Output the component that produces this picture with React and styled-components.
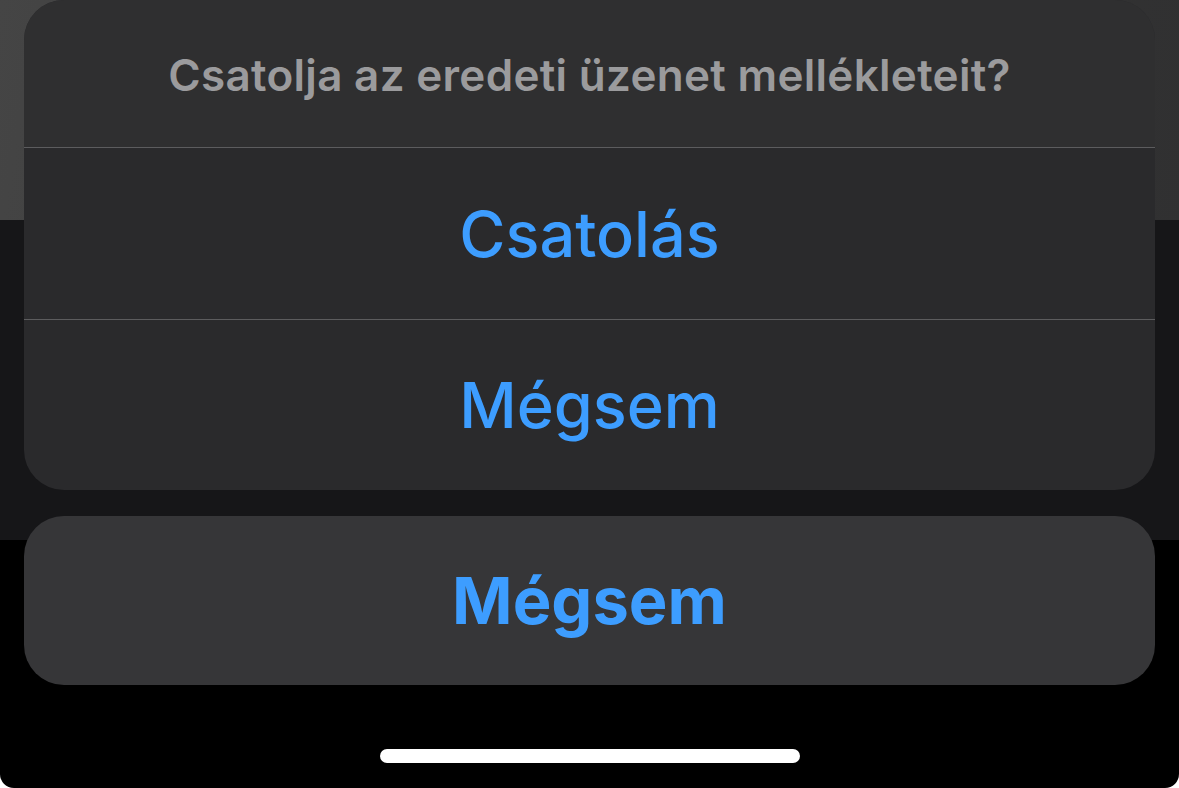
import React from 'react'
import styled, { createGlobalStyle } from 'styled-components'

const Global = createGlobalStyle`
  html, body {
    margin: 0;
    padding: 0;
    background: #fff;
  }
  * { box-sizing: border-box; }
`

const Screen = styled.div`
  width: 1179px;
  height: 788px;
  overflow: hidden;
  border-radius: 0 0 14px 14px;
  display: flex;
  flex-direction: column;
  font-family: Inter, "Noto Sans", "Liberation Sans", sans-serif;
  background:
    linear-gradient(to bottom,
      transparent 0 220px,
      #161618 220px 540px,
      #000 540px),
    linear-gradient(100deg, #454545 0%, #383838 40%, #2f2f30 100%);
`

const Sheet = styled.div`
  display: flex;
  flex-direction: column;
  gap: 26px;
  padding: 0 24px;
`

const Group = styled.div`
  display: flex;
  flex-direction: column;
  border-radius: 40px;
  overflow: hidden;
  background: #2a2a2c;
`

const Title = styled.div`
  height: 147px;
  display: flex;
  align-items: center;
  justify-content: center;
  padding-top: 2px;
  background: #2f2f30;
  color: #9b9b9d;
  font-size: 44px;
  font-weight: 600;
  letter-spacing: 0.3px;
`

const Divider = styled.div`
  height: 1px;
  background: #5c5c5e;
`

const Action = styled.div`
  height: ${p => p.h}px;
  display: flex;
  align-items: center;
  justify-content: center;
  color: #3d9dff;
  font-size: ${p => (p.bold ? 65 : 63)}px;
  font-weight: ${p => (p.bold ? 700 : 500)};
  background: ${p => p.bg || 'transparent'};
  border-radius: ${p => (p.rounded ? '40px' : '0')};
`

const Bottom = styled.div`
  flex: 1;
  display: flex;
  align-items: flex-end;
  justify-content: center;
  padding-bottom: 25px;
`

const HomeBar = styled.div`
  width: 420px;
  height: 14px;
  border-radius: 7px;
  background: #fff;
`

export default function App() {
  return (
    <>
      <Global />
      <Screen>
        <Sheet>
          <Group>
            <Title>Csatolja az eredeti üzenet mellékleteit?</Title>
            <Divider />
            <Action h={171}>Csatolás</Action>
            <Divider />
            <Action h={170}>Mégsem</Action>
          </Group>
          <Action h={169} bold rounded bg="#363638">Mégsem</Action>
        </Sheet>
        <Bottom>
          <HomeBar />
        </Bottom>
      </Screen>
    </>
  )
}
